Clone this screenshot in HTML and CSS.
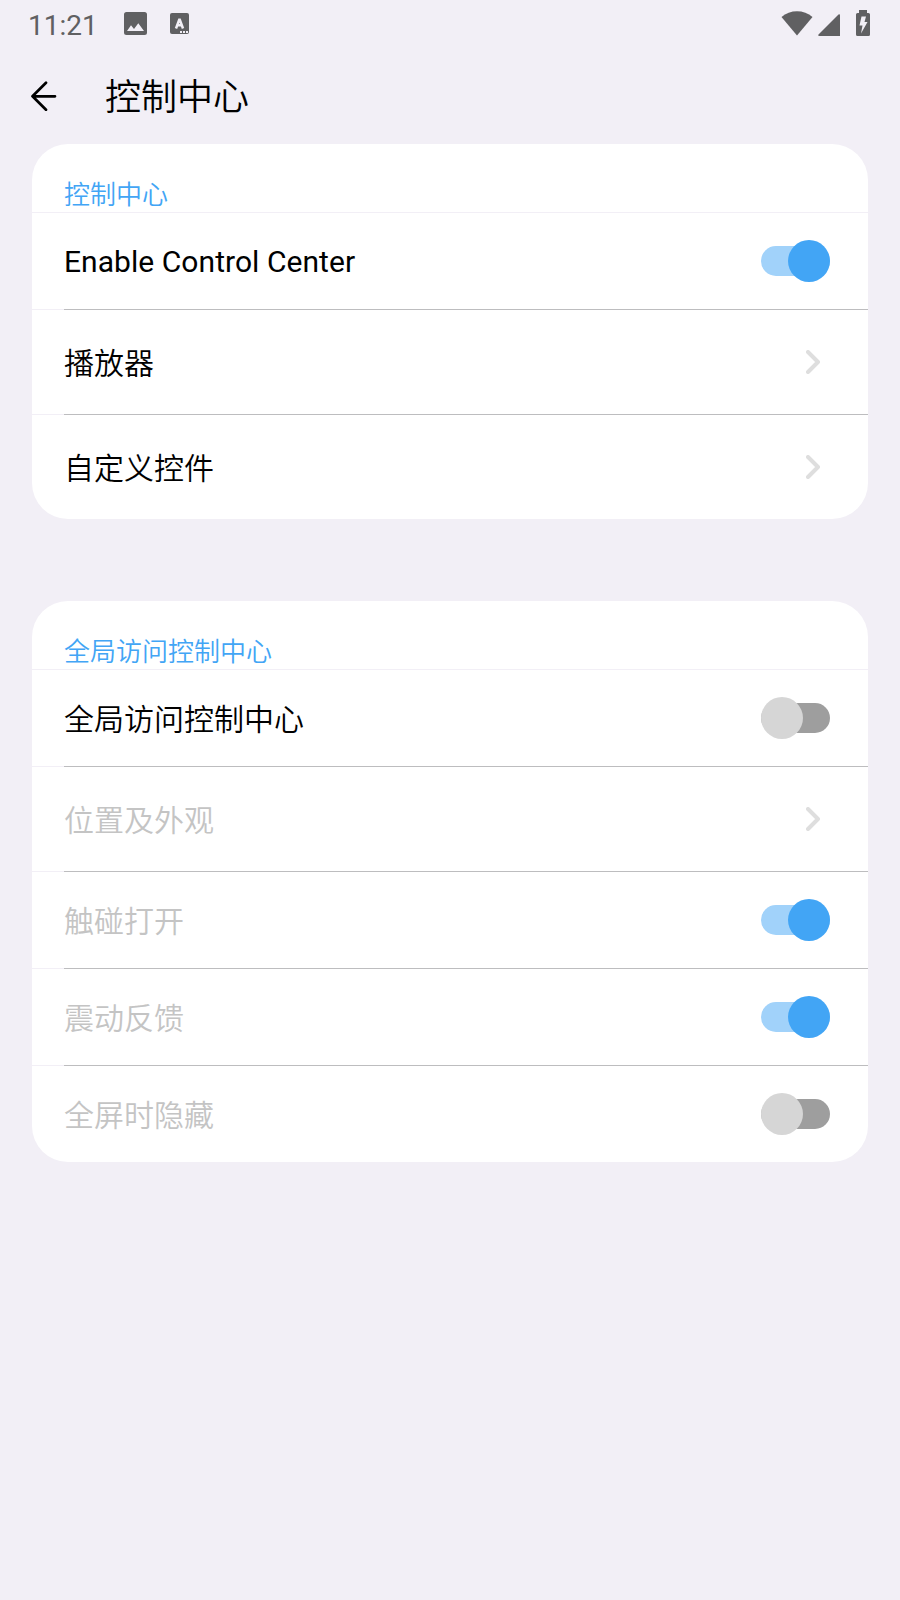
FILE: index.html
```html
<!DOCTYPE html>
<html lang="zh-CN">
<head>
<meta charset="utf-8">
<title>控制中心</title>
<link rel="stylesheet" href="styles.css">
</head>
<body>
<div class="status">
  <span class="clock">11:21</span>
  <svg class="picture" width="23" height="23" viewBox="0 0 23 23"><path fill="#606062" fill-rule="evenodd" d="M2.500 0h18A2.500 2.500 0 0 1 23 2.500v18a2.500 2.500 0 0 1-2.500 2.500h-18A2.500 2.500 0 0 1 0 20.500v-18A2.500 2.500 0 0 1 2.500 0zM3 19h17l-5.700-7.700-4.300 5.700-3-3.700z"/></svg>
  <svg class="keyboard" width="19" height="21" viewBox="0 0 19 21"><rect width="19" height="21" rx="2" fill="#606062"/><path d="M6 15.500 9.500 6 13 15.500M7 12.300h5" fill="none" stroke="#f2eff6" stroke-width="2.500" stroke-linejoin="bevel"/><path d="M10 18h2v2h-2zM13 18h2v2h-2zM16 18h2v2h-2z" fill="#f2eff6"/></svg>
  <svg class="wifi" width="32" height="25" viewBox="0 0 32 25"><path fill="#606062" d="M0.500 6C9-1.700 23-1.700 31.500 6L16 24.500z"/></svg>
  <svg class="signal" width="22" height="22" viewBox="0 0 22 22"><path fill="#606062" d="M22 1.500V22H1.500Q-.5 22 .5 20.500L20.500.5Q22-.5 22 1.500z"/></svg>
  <svg class="battery" width="14" height="26" viewBox="0 0 14 26"><path fill="#606062" d="M3 0h8v3h1.500Q14 3 14 4.500v20q0 1.500-1.500 1.500h-11Q0 26 0 24.500v-20Q0 3 1.500 3H3z"/><path fill="#f2eff6" d="M5.500 6.500H10L8.500 12H11.500L5 23.500 6.500 15.500H3.500z"/></svg>
</div>
<header class="appbar">
  <svg class="back" width="26" height="30" viewBox="0 0 26 30"><path d="M15 1.800 1.500 15.300 15 28.800M1.500 15.300H24" fill="none" stroke="#000" stroke-width="2.700" stroke-linecap="round" stroke-linejoin="round"/></svg>
  <h1 class="title">控制中心</h1>
</header>
<main class="content">
  <section class="card">
    <h2 class="heading">控制中心</h2>
    <div class="row"><span class="label latin">Enable Control Center</span><span class="switch on"></span></div>
    <div class="row link"><span class="label">播放器</span><svg class="chevron" width="14" height="24" viewBox="0 0 14 24"><path d="M2 2 12 12 2 22"/></svg></div>
    <div class="row link"><span class="label">自定义控件</span><svg class="chevron" width="14" height="24" viewBox="0 0 14 24"><path d="M2 2 12 12 2 22"/></svg></div>
  </section>
  <section class="card">
    <h2 class="heading">全局访问控制中心</h2>
    <div class="row"><span class="label">全局访问控制中心</span><span class="switch"></span></div>
    <div class="row link disabled"><span class="label">位置及外观</span><svg class="chevron" width="14" height="24" viewBox="0 0 14 24"><path d="M2 2 12 12 2 22"/></svg></div>
    <div class="row disabled"><span class="label">触碰打开</span><span class="switch on"></span></div>
    <div class="row disabled"><span class="label">震动反馈</span><span class="switch on"></span></div>
    <div class="row disabled"><span class="label">全屏时隐藏</span><span class="switch"></span></div>
  </section>
</main>
</body>
</html>
```
FILE: styles.css
```css
* { box-sizing: border-box; }
body {
  margin: 0;
  min-height: 1600px;
  background: #f2eff6;
  color: #000;
  font-family: Roboto, "Noto Sans CJK SC", sans-serif;
}
.status {
  display: flex;
  height: 48px;
  padding: 0 30px 0 29px;
}
.clock {
  width: 95px;
  margin-left: -1px;
  margin-right: 1px;
  color: #606062;
  font-size: 28px;
  font-weight: 450;
  line-height: 51px;
}
.picture { margin-top: 12px; }
.keyboard { margin: 13px 0 0 22.500px; }
.wifi { margin: 11px 0 0 auto; }
.signal { margin: 14px 0 0 5px; }
.battery { margin: 10px 0 0 16px; }
.appbar {
  display: flex;
  align-items: center;
  height: 96px;
  padding-left: 31px;
}
.title {
  margin: 0 0 0 48px;
  padding-top: 4px;
  font-size: 36px;
  font-weight: 350;
  line-height: 52px;
}
.content {
  display: flex;
  flex-direction: column;
  gap: 82px;
  padding: 0 32px;
}
.card {
  overflow: hidden;
  border-radius: 36px;
  background: #fff;
}
.heading {
  height: 69px;
  margin: 0;
  padding: 33px 0 0 32px;
  border-bottom: 1px solid #f2eff6;
  color: #42a5f5;
  font-size: 26px;
  font-weight: 350;
  line-height: 36px;
}
.row {
  display: flex;
  align-items: center;
  justify-content: space-between;
  height: 97px;
  padding: 0 38px 1px 32px;
  background: linear-gradient(to right, #f2eff6 32px, #bdbdbf 32px) bottom / 100% 1px no-repeat;
}
.link { height: 105px; padding-right: 48px; }
.row:last-child {
  height: 96px;
  padding-bottom: 0;
  background: none;
}
.link:last-child { height: 104px; }
.label {
  padding-top: 3px;
  font-size: 30px;
  font-weight: 350;
  line-height: 44px;
}
.latin {
  padding-top: 2px;
  font-weight: 400;
  letter-spacing: 0.05px;
}
.disabled .label { color: #c4c4c4; }
.chevron path {
  fill: none;
  stroke: #dedede;
  stroke-width: 4;
  stroke-linecap: round;
  stroke-linejoin: round;
}
.switch {
  display: flex;
  align-items: center;
  width: 69px;
  height: 30px;
  border-radius: 15px;
  background: #9e9e9e;
}
.switch::before {
  content: "";
  flex: none;
  width: 42px;
  height: 42px;
  border-radius: 50%;
  background: #d6d6d6;
}
.switch.on { justify-content: flex-end; background: #a1d2fa; }
.switch.on::before { background: #42a5f5; }
```
